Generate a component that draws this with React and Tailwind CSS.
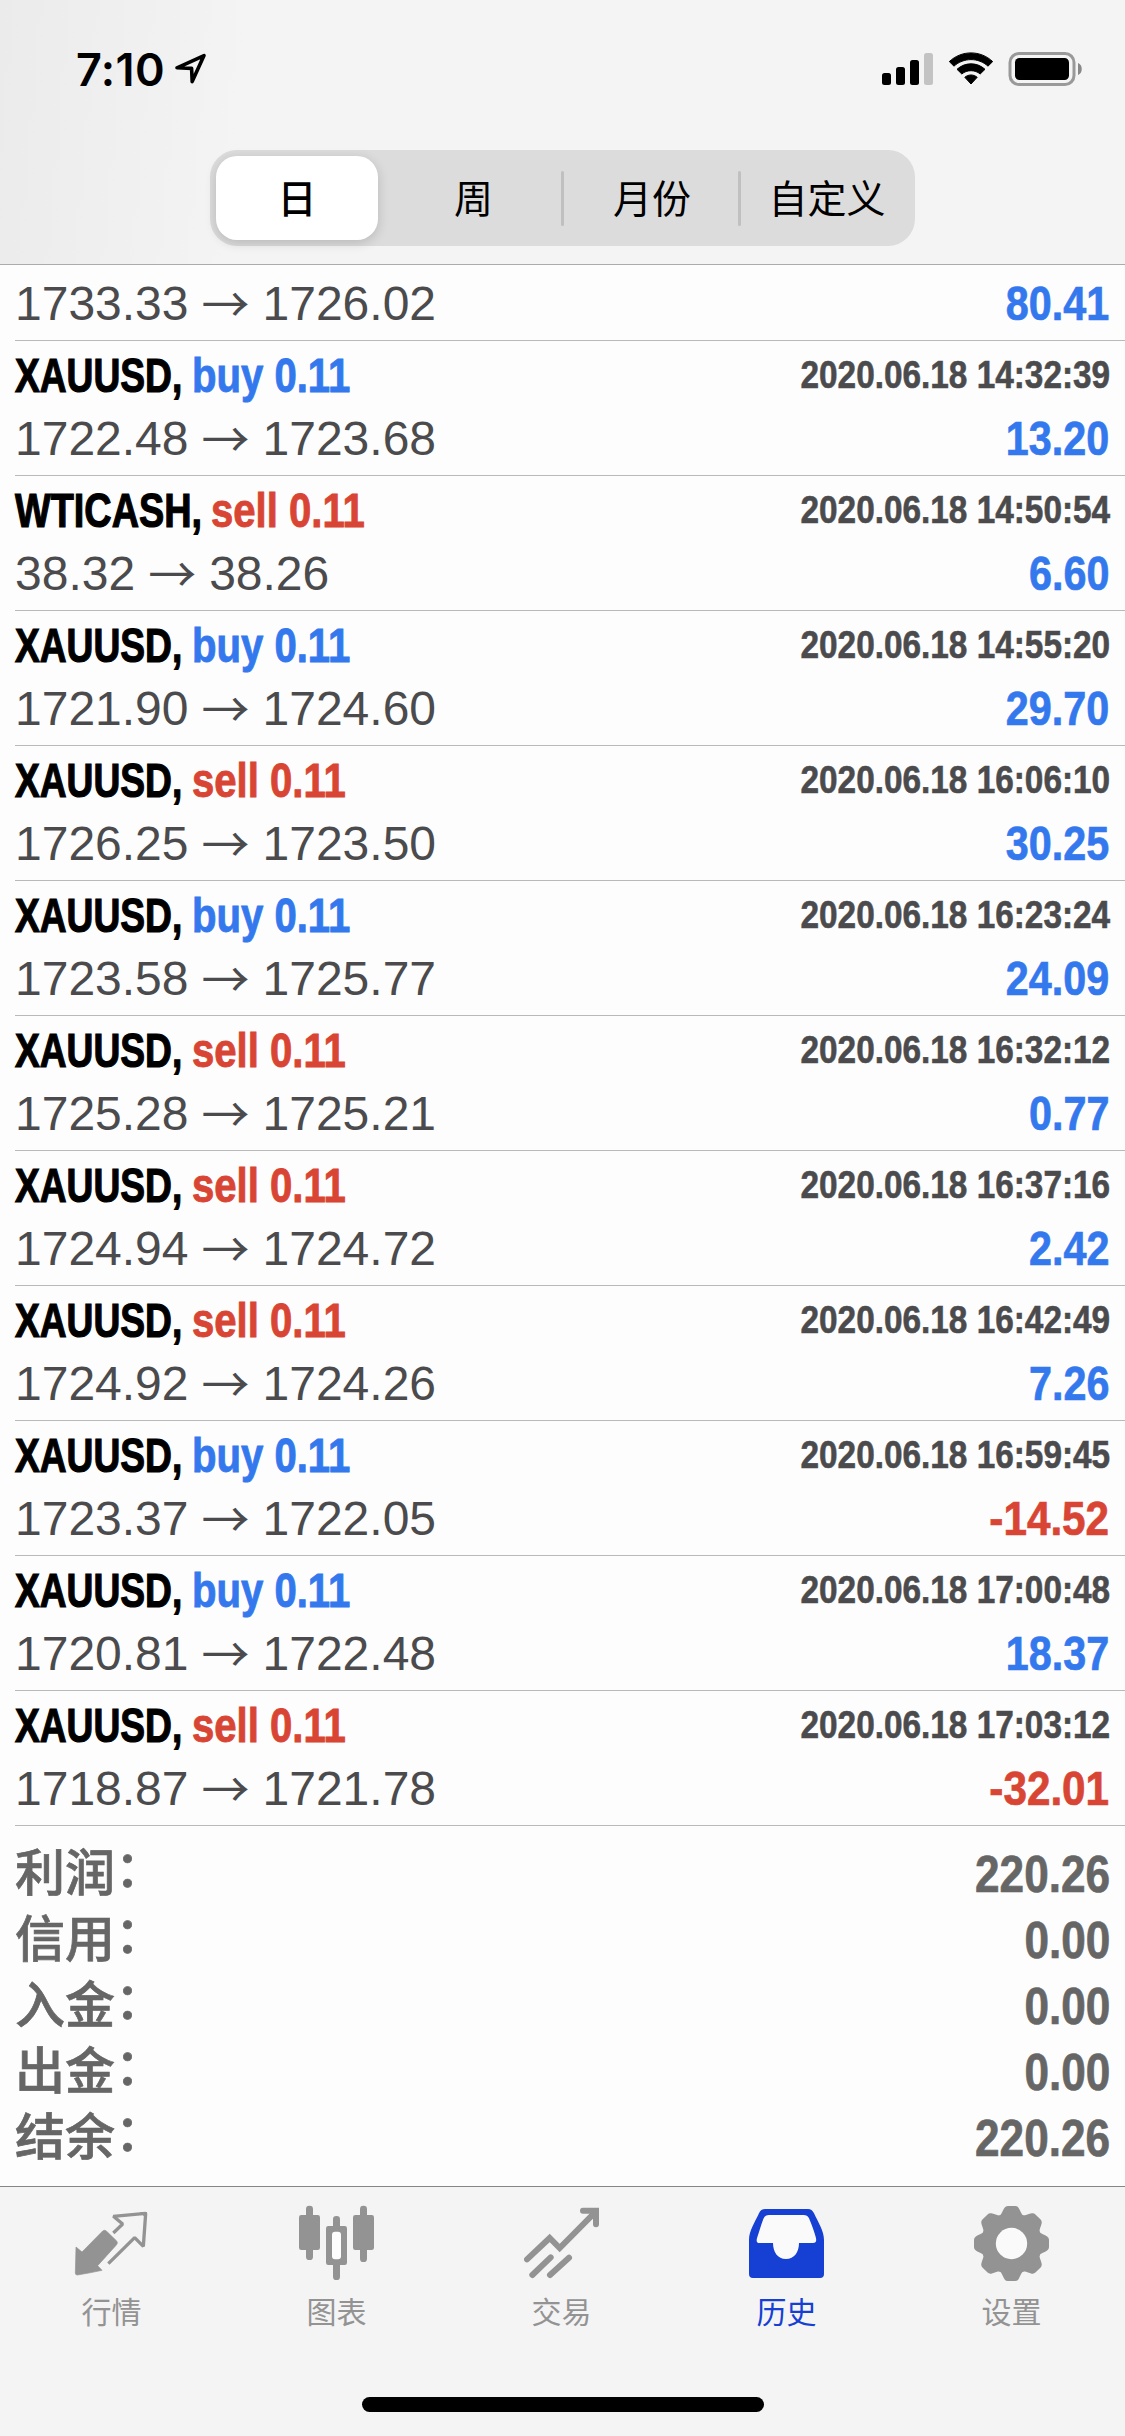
const deals = [
  ["XAUUSD", "buy", "2020.06.18 14:32:39", "1722.48", "1723.68", "13.20"],
  ["WTICASH", "sell", "2020.06.18 14:50:54", "38.32", "38.26", "6.60"],
  ["XAUUSD", "buy", "2020.06.18 14:55:20", "1721.90", "1724.60", "29.70"],
  ["XAUUSD", "sell", "2020.06.18 16:06:10", "1726.25", "1723.50", "30.25"],
  ["XAUUSD", "buy", "2020.06.18 16:23:24", "1723.58", "1725.77", "24.09"],
  ["XAUUSD", "sell", "2020.06.18 16:32:12", "1725.28", "1725.21", "0.77"],
  ["XAUUSD", "sell", "2020.06.18 16:37:16", "1724.94", "1724.72", "2.42"],
  ["XAUUSD", "sell", "2020.06.18 16:42:49", "1724.92", "1724.26", "7.26"],
  ["XAUUSD", "buy", "2020.06.18 16:59:45", "1723.37", "1722.05", "-14.52"],
  ["XAUUSD", "buy", "2020.06.18 17:00:48", "1720.81", "1722.48", "18.37"],
  ["XAUUSD", "sell", "2020.06.18 17:03:12", "1718.87", "1721.78", "-32.01"],
];

const totals = [
  ["利润", "220.26"],
  ["信用", "0.00"],
  ["入金", "0.00"],
  ["出金", "0.00"],
  ["结余", "220.26"],
];

function StatusBar() {
  return (
    <div className="flex h-[138px] items-center justify-between pr-[43px] pl-[76px]">
      <div className="flex items-center gap-[11px]">
        <span className="w-[88px] whitespace-nowrap font-['Inter',sans-serif] text-[45px] leading-none font-semibold tracking-[0.4px] text-black">7:10</span>
        <svg className="h-[32px] w-[32px]" viewBox="0 0 32 32" fill="none" stroke="#000" strokeWidth="3.6" strokeLinejoin="round">
          <path d="M2 14.8 29 2.6 17.2 28.6 16.6 15.4Z" />
        </svg>
      </div>
      <div className="flex items-center">
        <svg className="h-[34px] w-[51px]" viewBox="0 0 51 34">
          <rect x="0" y="21" width="9" height="12" rx="2.5" />
          <rect x="14" y="15" width="9" height="18" rx="2.5" />
          <rect x="28" y="8" width="9" height="25" rx="2.5" />
          <rect x="42" y="1" width="9" height="32" rx="2.5" fill="#c3c3c3" />
        </svg>
        <svg className="ml-[15px] h-[34px] w-[46px]" viewBox="0 0 46 34">
          <path d="M1.3 9.6C13.500 -2 32.500 -2 44.700 9.600L40 14.200C30.500 5.400 15.500 5.400 6 14.200Z" stroke="#000" strokeWidth="1" strokeLinejoin="round" />
          <path d="M9 17.300C17 10 29 10 37 17.300L32.200 22C27 17.600 19 17.600 13.800 22Z" stroke="#000" strokeWidth="1" strokeLinejoin="round" />
          <path d="M16.800 25.300C20.500 22.200 25.500 22.200 29.200 25.300L23 32Z" stroke="#000" strokeWidth="1" strokeLinejoin="round" />
        </svg>
        <svg className="ml-[14px] h-[34px] w-[74px]" viewBox="0 0 74 34">
          <rect x="2" y="1.500" width="64" height="31" rx="9" fill="none" stroke="#999" strokeWidth="3" />
          <rect x="7" y="6" width="54" height="22" rx="4.500" />
          <path d="M70 11c5 1.500 5 10.500 0 12Z" fill="#888" />
        </svg>
      </div>
    </div>
  );
}

function Segments() {
  return (
    <div className="mx-auto mt-[12px] flex h-[96px] w-[705px] items-center rounded-[27px] bg-[#dcdcdc] pl-[6px] font-['Noto_Sans_CJK_SC',sans-serif] text-[39px] leading-none text-black">
      <div className="flex h-[84px] w-[162px] items-center justify-center rounded-[21px] bg-white pb-[3px] font-medium shadow-[0_3px_12px_rgba(0,0,0,0.16)]">日</div>
      <div className="flex w-[183px] justify-center pb-[3px] pl-[8px]">周</div>
      <div className="h-[55px] w-[3px] rounded-full bg-[#c0c0c0]" />
      <div className="flex w-[174px] justify-center pb-[3px] pl-[2px]">月份</div>
      <div className="h-[55px] w-[3px] rounded-full bg-[#c0c0c0]" />
      <div className="flex w-[174px] justify-center pr-[2px] pb-[3px]">自定义</div>
    </div>
  );
}

function Prices({ open, close, profit }) {
  const tone = profit.startsWith("-") ? "scale-x-[0.88] text-[#d94534]" : "scale-x-[0.86] text-[#3478ee]";
  return (
    <div className="flex h-[61px] items-center justify-between text-[48px] leading-none">
      <div className="flex items-center text-[#4b4b4d]">
        <span>{open}</span>
        <span className="mx-[13px] w-[48px] pb-[5px] text-center font-['Noto_Sans_CJK_SC',sans-serif]">→</span>
        <span>{close}</span>
      </div>
      <span className={`mr-px origin-right font-bold [-webkit-text-stroke:0.7px_currentColor] ${tone}`}>{profit}</span>
    </div>
  );
}

function Deal({ deal }) {
  const [symbol, side, date, open, close, profit] = deal;
  const wide = symbol.length > 6;
  return (
    <div className="h-[135px] border-b border-[#b9b9bb] pr-[15px]">
      <div className="flex h-[67px] items-center justify-between font-bold">
        <div className="flex items-center pt-[3px] text-[48px] leading-none">
          <div className={wide ? "w-[196px]" : "w-[177px]"}>
            <span className={`inline-block origin-left whitespace-nowrap text-black [-webkit-text-stroke:1.2px_currentColor] ${wide ? "scale-x-[0.788]" : "scale-x-[0.774]"}`}>{symbol},</span>
          </div>
          <span className={`origin-left scale-x-[0.835] whitespace-nowrap [-webkit-text-stroke:0.9px_currentColor] ${side === "buy" ? "text-[#3478ee]" : "text-[#d94534]"}`}>{side} 0.11</span>
        </div>
        <span className="origin-right scale-x-[0.855] whitespace-nowrap text-[39px] leading-none text-[#4b4b4d] [-webkit-text-stroke:0.6px_currentColor]">{date}</span>
      </div>
      <Prices open={open} close={close} profit={profit} />
    </div>
  );
}

function QuotesIcon() {
  return (
    <svg className="h-[77px] w-[75px]" viewBox="222 105 225 231">
      <path d="M228 231 246 246 308 183Q314 178 320 184L350 213Q355 219 349 225L293 287 306 301Q270 309 232 315 226 315 226 309Z" fill="#939393" stroke="#939393" strokeWidth="2" strokeLinejoin="round" />
      <path d="M340 189 368 162 340 139 437 130 430 229 404 203 325 281" fill="none" stroke="#939393" strokeWidth="10" strokeLinejoin="bevel" />
      <path d="M420 126H441L440 148Z" fill="#939393" />
    </svg>
  );
}

function ChartIcon() {
  return (
    <svg className="h-[77px] w-[75px]" viewBox="897 105 225 231" fill="#939393">
      <rect x="897" y="135" width="63" height="105" rx="7" />
      <rect x="918" y="107" width="21" height="163" rx="10" />
      <rect x="1059" y="135" width="63" height="105" rx="7" />
      <rect x="1080" y="107" width="21" height="169" rx="10" />
      <rect x="999" y="138" width="21" height="50" rx="10" />
      <rect x="999" y="270" width="21" height="60" rx="10" />
      <rect x="978" y="168" width="63" height="117" rx="7" />
      <rect x="996" y="185" width="27" height="83" rx="9" fill="#fdfdfd" />
    </svg>
  );
}

function TradeIcon() {
  return (
    <svg className="h-[77px] w-[75px]" viewBox="372 105 225 231" fill="none" stroke="#939393" strokeWidth="18" strokeLinecap="round">
      <path d="M381 268 449 204 479 234 585 127" strokeLinejoin="miter" />
      <path d="M549 122H588V163" />
      <path d="M397 315 452 262M450 315 507 263" />
    </svg>
  );
}

function HistoryIcon() {
  return (
    <svg className="h-[77px] w-[75px]" viewBox="132 105 225 231">
      <path d="M180 117H309Q321 117 327 130C340 158 357 183 357 210V312Q357 324 345 324H144Q132 324 132 312V210C132 183 149 158 162 130Q168 117 180 117Z" fill="#163fd3" />
      <path d="M192 135H296Q307 135 312 145C318 160 329 186 333 205Q336 219 324 219H282C282 246 268 267 243 267S204 246 204 219H164Q152 219 156 205C162 186 170 160 176 145Q181 135 192 135Z" fill="#fafafa" />
    </svg>
  );
}

function SettingsIcon() {
  const tooth = "M-36 -82C-29 -88 -26 -100 -21 -107Q-17 -112.500 -11 -112.500H11Q17 -112.500 21 -107C26 -100 29 -88 36 -82V0H-36Z";
  return (
    <svg className="h-[77px] w-[75px]" viewBox="807 105 225 231">
      <g transform="translate(919.5 220.5)" fill="#939393">
        {[0, 45, 90, 135, 180, 225, 270, 315].map((angle) => (
          <path key={angle} d={tooth} transform={`rotate(${angle})`} />
        ))}
        <circle r="92" />
        <circle r="47" fill="#fafafa" />
      </g>
    </svg>
  );
}

const tabs = [
  ["行情", QuotesIcon],
  ["图表", ChartIcon],
  ["交易", TradeIcon],
  ["历史", HistoryIcon],
  ["设置", SettingsIcon],
];

function TabBar() {
  return (
    <nav className="flex h-[250px] flex-col border-t border-[#858585] bg-[#f4f4f4]">
      <div className="-ml-px grid w-[1125px] grid-cols-5 pt-[18px]">
        {tabs.map(([label, Icon]) => (
          <div key={label} className="flex flex-col items-center">
            <Icon />
            <span className={`mt-[13px] font-['Noto_Sans_CJK_SC',sans-serif] text-[30px] leading-[30px] ${label === "历史" ? "text-[#163fd3]" : "text-[#939393]"}`}>{label}</span>
          </div>
        ))}
      </div>
      <div className="mx-auto mt-auto mb-[24px] h-[15px] w-[402px] rounded-full bg-black" />
    </nav>
  );
}

export default function App() {
  return (
    <div className="flex h-[2436px] w-[1125px] flex-col overflow-hidden bg-[#fdfdfd] font-['Liberation_Sans',Arial,sans-serif]">
      <header className="h-[265px] border-b border-[#ababab] bg-[linear-gradient(95deg,#ebebeb_0%,#f4f4f4_22%)]">
        <StatusBar />
        <Segments />
      </header>
      <main className="flex-1 pl-[15px]">
        <div className="h-[76px] border-b border-[#b9b9bb] pt-[8px] pr-[15px]">
          <Prices open="1733.33" close="1726.02" profit="80.41" />
        </div>
        {deals.map((deal) => (
          <Deal key={deal[2]} deal={deal} />
        ))}
        <div className="pt-[15px] pr-[15px] leading-none text-[#666]">
          {totals.map(([label, value]) => (
            <div key={label} className="flex h-[66px] items-center justify-between">
              <div lang="zh-CN" className="flex items-center font-['Liberation_Sans','Noto_Sans_CJK_SC',sans-serif] text-[50px] font-medium [-webkit-text-stroke:0.7px_currentColor]">
                <span>{label}</span>
                <span className="pb-[9px]">：</span>
              </div>
              <span className="origin-right scale-x-[0.865] text-[51px] font-bold [-webkit-text-stroke:0.7px_currentColor]">{value}</span>
            </div>
          ))}
        </div>
      </main>
      <TabBar />
    </div>
  );
}
